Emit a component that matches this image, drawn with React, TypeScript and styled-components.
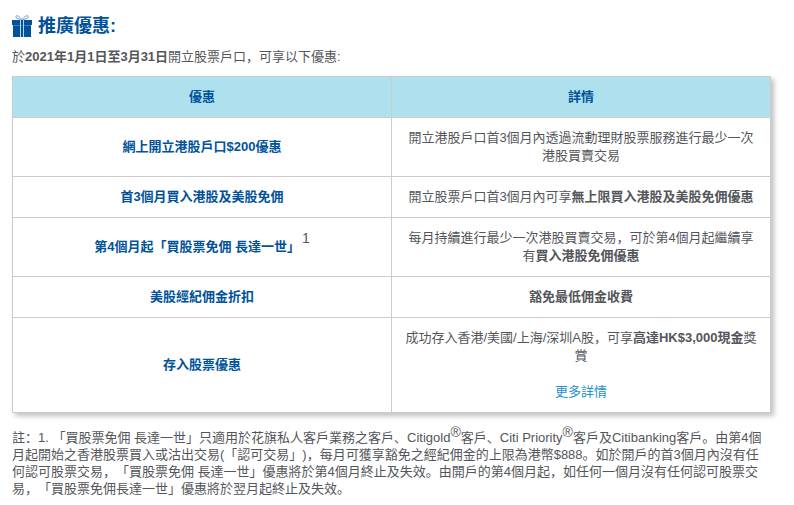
import React from "react";
import styled, { createGlobalStyle } from "styled-components";

const Global = createGlobalStyle`
  body {
    margin: 0; background: #fff; color: #53565a;
    font-family: "Liberation Sans", Arial, "Noto Sans CJK SC", sans-serif;
    font-size: 13px; line-height: 18px; text-spacing-trim: space-all;
  }
`;
const Page = styled.main`padding: 12px 23px 12px 12px;`;
const Heading = styled.h1`
  display: flex; align-items: center; gap: 6px; margin: 0;
  color: #00529b; font-size: 18px; line-height: 28px; font-weight: 700;
`;
const Intro = styled.p`margin: 8px 0 10px;`;
const Table = styled.table`
  width: 100%; border-collapse: collapse; table-layout: fixed; text-align: center;
  box-shadow: 3px 3px 5px rgba(0, 0, 0, 0.25);
`;
const Head = styled.th`
  background: #afe0ee; color: #00529b; border: 1px solid #ccc; padding: 11px 10px;
`;
const Offer = styled.th`
  color: #00529b; border: 1px solid #ccc; padding: 11px 10px;
`;
const Detail = styled.td`border: 1px solid #ccc; padding: 11px 10px;`;
const More = styled.p`margin: 18px 0 0;`;
const Link = styled.a`color: #2490c8; text-decoration: none;`;
const Mark = styled.sup`font-size: 14px; line-height: 0;`;
const FootnoteMark = styled(Mark)`
  margin-left: 2px; vertical-align: 8px; font-weight: 400; color: #53565a;
`;
const Note = styled.p`margin: 16px 0 0; line-height: 17px;`;

const Gift = () => (
  <svg width="20" height="22" viewBox="0 0 20 22" aria-hidden="true">
    <path d="M0 5h20v5H0zM1 10h18v12H1z" fill="#00529b" />
    <path d="M1 10.500h18" stroke="#3d78b3" />
    <path d="M8.500 5v17M11.500 5v17" stroke="#bcd3e8" />
    <path d="M9.500 4.500C8 1.500 5 0 4 1.200S5 4 9.500 4.500zM10.500 4.500C12 1.500 15 0 16 1.200S15 4 10.500 4.500z" fill="#fff" stroke="#6f9cc8" />
  </svg>
);

export default function App() {
  return (
    <Page lang="zh-Hans">
      <Global />
      <Heading><Gift />推廣優惠:</Heading>
      <Intro>於<b>2021年1月1日至3月31日</b>開立股票戶口，可享以下優惠:</Intro>
      <Table>
        <thead><tr><Head scope="col">優惠</Head><Head scope="col">詳情</Head></tr></thead>
        <tbody>
          <tr><Offer scope="row">網上開立港股戶口$200優惠</Offer><Detail>開立港股戶口首3個月內透過流動理財股票服務進行最少一次港股買賣交易</Detail></tr>
          <tr><Offer scope="row">首3個月買入港股及美股免佣</Offer><Detail>開立股票戶口首3個月內可享<b>無上限買入港股及美股免佣優惠</b></Detail></tr>
          <tr><Offer scope="row">第4個月起「買股票免佣 長達一世」<FootnoteMark>1</FootnoteMark></Offer><Detail>每月持續進行最少一次港股買賣交易，可於第4個月起繼續享有<b>買入港股免佣優惠</b></Detail></tr>
          <tr><Offer scope="row">美股經紀佣金折扣</Offer><Detail><b>豁免最低佣金收費</b></Detail></tr>
          <tr><Offer scope="row">存入股票優惠</Offer><Detail>成功存入香港/美國/上海/深圳A股，可享<b>高達HK$3,000現金</b>獎賞<More><Link href="#more">更多詳情</Link></More></Detail></tr>
        </tbody>
      </Table>
      <Note>註：1. 「買股票免佣 長達一世」只適用於花旗私人客戶業務之客戶、Citigold<Mark>®</Mark>客戶、Citi Priority<Mark>®</Mark>客戶及Citibanking客戶。由第4個月起開始之香港股票買入或沽出交易(「認可交易」)，每月可獲享豁免之經紀佣金的上限為港幣$888。如於開戶的首3個月內沒有任何認可股票交易，「買股票免佣 長達一世」優惠將於第4個月終止及失效。由開戶的第4個月起，如任何一個月沒有任何認可股票交易，「買股票免佣長達一世」優惠將於翌月起終止及失效。</Note>
    </Page>
  );
}
